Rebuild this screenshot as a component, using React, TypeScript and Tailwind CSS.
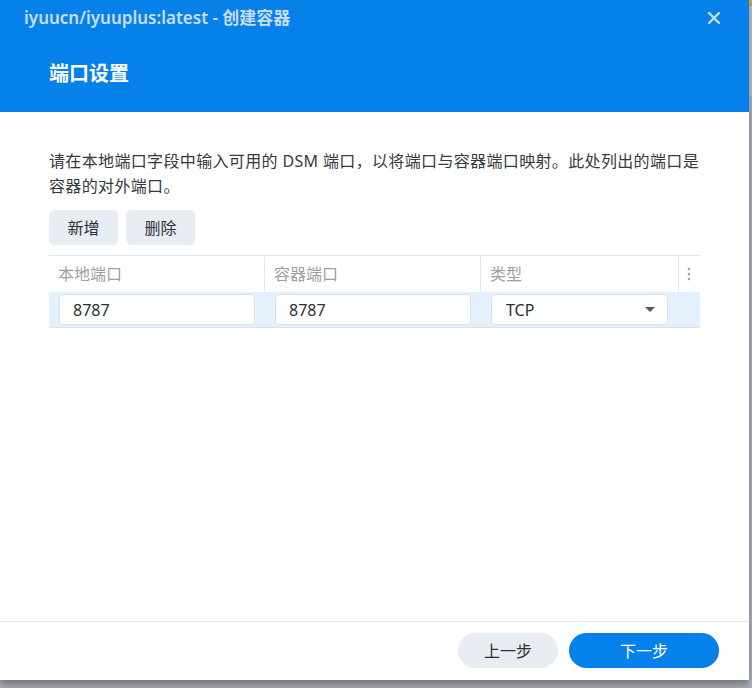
import React from 'react';

const font = { fontFamily: '"Noto Sans", "Noto Sans CJK SC", sans-serif' };

function Header() {
  return (
    <div className="h-[112px] bg-[#0781ea] flex flex-col">
      <div className="h-[35px] flex items-center justify-between pl-[24px] pr-[28px]">
        <span className="text-[17px] font-semibold text-[#c6def7]">
          iyuucn/iyuuplus:latest - 创建容器
        </span>
        <svg width="14" height="14" viewBox="0 0 14 14" className="text-[#c6def7]">
          <path d="M2 2 L12 12 M12 2 L2 12" stroke="currentColor" strokeWidth="2.4" strokeLinecap="round" />
        </svg>
      </div>
      <div className="flex-1 flex items-center pl-[49px] pb-[0px]">
        <h1 className="text-[20px] font-bold text-white">端口设置</h1>
      </div>
    </div>
  );
}

function PortTable() {
  return (
    <div className="mt-[10px] border-t border-[#dfe5ec]">
      <div className="grid grid-cols-[216px_216px_198px_19px] h-[36px] text-[16px] text-[#9aa0a8]">
        <div className="flex items-center pl-[9px] border-r border-[#e3e8ee]">本地端口</div>
        <div className="flex items-center pl-[9px] border-r border-[#e3e8ee]">容器端口</div>
        <div className="flex items-center pl-[9px] border-r border-[#e3e8ee]">类型</div>
        <div className="flex items-center justify-center">
          <svg width="4" height="14" viewBox="0 0 4 14">
            <circle cx="2" cy="2" r="1.3" fill="#9aa0a8" />
            <circle cx="2" cy="7" r="1.3" fill="#9aa0a8" />
            <circle cx="2" cy="12" r="1.3" fill="#9aa0a8" />
          </svg>
        </div>
      </div>
      <div className="grid grid-cols-[216px_216px_198px_19px] h-[36px] bg-[#e4f0fc] border-b border-[#d5e3f1] items-center">
        <div className="pl-[10px] pr-[10px]">
          <div className="h-[31px] bg-white border border-[#dbe2ea] rounded-[4px] flex items-center pl-[13px] text-[16px] text-[#2b2f36]">8787</div>
        </div>
        <div className="pl-[10px] pr-[10px]">
          <div className="h-[31px] bg-white border border-[#dbe2ea] rounded-[4px] flex items-center pl-[13px] text-[16px] text-[#2b2f36]">8787</div>
        </div>
        <div className="pl-[10px] pr-[11px]">
          <div className="h-[31px] bg-white border border-[#dbe2ea] rounded-[4px] flex items-center justify-between pl-[14px] pr-[12px] text-[16px] text-[#2b2f36]">
            <span>TCP</span>
            <svg width="10" height="6" viewBox="0 0 10 6">
              <path d="M0 0 L10 0 L5 5 Z" fill="#555a61" />
            </svg>
          </div>
        </div>
        <div />
      </div>
    </div>
  );
}

function Body() {
  return (
    <div className="flex-1 px-[49px] pt-[37px]">
      <p className="text-[16px] leading-[25px] tracking-[0.35px] text-[#343a40] whitespace-nowrap">
        请在本地端口字段中输入可用的 DSM 端口，以将端口与容器端口映射。此处列出的端口是
        <br />
        容器的对外端口。
      </p>
      <div className="flex gap-[8px] mt-[11px]">
        <button className="w-[69px] h-[35px] rounded-[5px] bg-[#e8edf3] text-[16px] text-[#2b2f36]">新增</button>
        <button className="w-[69px] h-[35px] rounded-[5px] bg-[#e8edf3] text-[16px] text-[#2b2f36]">删除</button>
      </div>
      <PortTable />
    </div>
  );
}

function Footer() {
  return (
    <div className="h-[59px] border-t border-[#e1e6ec] flex items-start justify-end gap-[11px] pt-[11px] pr-[30px]">
      <button className="w-[100px] h-[35px] rounded-full bg-[#e8edf3] text-[16px] text-[#2b2f36]">上一步</button>
      <button className="w-[150px] h-[35px] rounded-full bg-[#0781ea] text-[16px] text-white">下一步</button>
    </div>
  );
}

export default function App() {
  return (
    <div className="w-[752px] h-[688px] bg-[#a9adb2] relative overflow-hidden" style={font}>
      <div className="absolute right-0 top-0 w-[3px] h-[688px] flex flex-col">
        <div className="h-[6px] bg-[#d29c4a]" />
        <div className="h-[90px] bg-[#bfc3c8]" />
        <div className="flex-1 bg-[#aab4c0]" />
      </div>
      <div className="w-[749px] h-[680px] bg-white flex flex-col shadow-[0_4px_8px_rgba(0,0,0,0.35)] relative">
        <Header />
        <Body />
        <Footer />
      </div>
    </div>
  );
}
